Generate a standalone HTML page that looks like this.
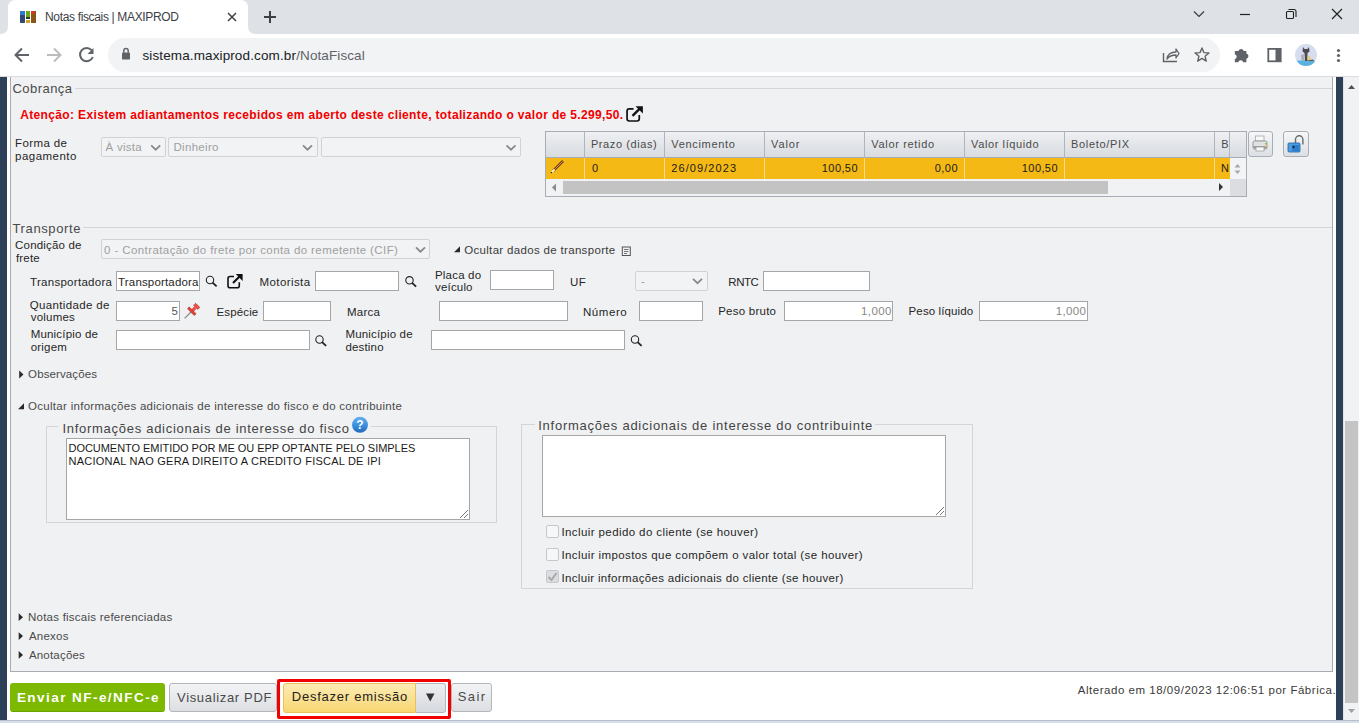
<!DOCTYPE html>
<html><head><meta charset="utf-8">
<style>
*{margin:0;padding:0;box-sizing:border-box;}
html,body{width:1359px;height:723px;overflow:hidden;background:#fff;font-family:"Liberation Sans",sans-serif;}
.b{position:absolute;}
svg{position:absolute;left:0;top:0;}
svg text{font-family:"Liberation Sans",sans-serif;}
</style></head><body>
<div class="b" style="left:0px;top:77px;width:1359px;height:646px;background:#fff"></div>
<div class="b" style="left:0px;top:77px;width:7px;height:643px;background:#2c4058"></div>
<div class="b" style="left:1336px;top:77px;width:7px;height:643px;background:#2c4058"></div>
<div class="b" style="left:1343px;top:77px;width:1px;height:643px;background:#e3e4e8"></div>
<div class="b" style="left:1344px;top:77px;width:15px;height:643px;background:#f1f2f4"></div>
<div class="b" style="left:1345px;top:421px;width:13px;height:282px;background:#c4c4c4"></div>
<div class="b" style="left:0px;top:720px;width:1359px;height:3px;background:#d6dfeb;border-top:1px solid #b9bdc5"></div>
<div class="b" style="left:7px;top:716px;width:4px;height:4px;background:#fff;border-radius:0 0 0 3px"></div>
<div class="b" style="left:10px;top:77px;width:1323px;height:595px;background:#f0f1f3;border:1px solid #a8abb4;border-top:none"></div>
<div class="b" style="left:75px;top:88px;width:1257px;height:1px;background:#d3d5d9"></div>
<div class="b" style="left:101px;top:137px;width:65px;height:20px;background:#f2f3f4;border:1px solid #d0d2d6;border-radius:2px"></div>
<div class="b" style="left:168px;top:137px;width:150px;height:20px;background:#f2f3f4;border:1px solid #d0d2d6;border-radius:2px"></div>
<div class="b" style="left:321px;top:137px;width:200px;height:20px;background:#f2f3f4;border:1px solid #d0d2d6;border-radius:2px"></div>
<div class="b" style="left:545px;top:131px;width:702px;height:66px;background:#f1f2f4;border:1px solid #a9acb4"></div>
<div class="b" style="left:546px;top:132px;width:700px;height:25px;background:linear-gradient(#eef0f2,#d8dbe0)"></div>
<div class="b" style="left:546px;top:157px;width:700px;height:1px;background:#a9acb4"></div>
<div class="b" style="left:546px;top:158px;width:684px;height:21px;background:#f5b916"></div>
<div class="b" style="left:584px;top:132px;width:1px;height:25px;background:#b0b4bc"></div>
<div class="b" style="left:584px;top:158px;width:1px;height:21px;background:#f9dc8c"></div>
<div class="b" style="left:664px;top:132px;width:1px;height:25px;background:#b0b4bc"></div>
<div class="b" style="left:664px;top:158px;width:1px;height:21px;background:#f9dc8c"></div>
<div class="b" style="left:764px;top:132px;width:1px;height:25px;background:#b0b4bc"></div>
<div class="b" style="left:764px;top:158px;width:1px;height:21px;background:#f9dc8c"></div>
<div class="b" style="left:864px;top:132px;width:1px;height:25px;background:#b0b4bc"></div>
<div class="b" style="left:864px;top:158px;width:1px;height:21px;background:#f9dc8c"></div>
<div class="b" style="left:964px;top:132px;width:1px;height:25px;background:#b0b4bc"></div>
<div class="b" style="left:964px;top:158px;width:1px;height:21px;background:#f9dc8c"></div>
<div class="b" style="left:1064px;top:132px;width:1px;height:25px;background:#b0b4bc"></div>
<div class="b" style="left:1064px;top:158px;width:1px;height:21px;background:#f9dc8c"></div>
<div class="b" style="left:1214px;top:132px;width:1px;height:25px;background:#b0b4bc"></div>
<div class="b" style="left:1214px;top:158px;width:1px;height:21px;background:#f9dc8c"></div>
<div class="b" style="left:1229px;top:132px;width:1px;height:25px;background:#b0b4bc"></div>
<div class="b" style="left:1230px;top:158px;width:16px;height:21px;background:#f3f4f6"></div>
<div class="b" style="left:1230px;top:179px;width:16px;height:17px;background:#dcdde0"></div>
<div class="b" style="left:563px;top:181px;width:545px;height:13px;background:#c3c3c3"></div>
<div class="b" style="left:1248px;top:131px;width:25px;height:26px;background:linear-gradient(#f6f7f8,#dcdfe3);border:1px solid #a9adb5;border-radius:3px"></div>
<div class="b" style="left:1283px;top:131px;width:26px;height:26px;background:linear-gradient(#f6f7f8,#dcdfe3);border:1px solid #a9adb5;border-radius:3px"></div>
<div class="b" style="left:83px;top:227px;width:1249px;height:1px;background:#d3d5d9"></div>
<div class="b" style="left:101px;top:239px;width:329px;height:20px;background:#f2f3f4;border:1px solid #d0d2d6;border-radius:2px"></div>
<div class="b" style="left:116px;top:271px;width:84px;height:20px;background:#fff;border:1px solid #a6a6a6"></div>
<div class="b" style="left:315px;top:271px;width:84px;height:20px;background:#fff;border:1px solid #a6a6a6"></div>
<div class="b" style="left:490px;top:270px;width:64px;height:20px;background:#fff;border:1px solid #a6a6a6"></div>
<div class="b" style="left:635px;top:271px;width:73px;height:20px;background:#f2f3f4;border:1px solid #d0d2d6;border-radius:2px"></div>
<div class="b" style="left:763px;top:271px;width:107px;height:20px;background:#fff;border:1px solid #a6a6a6"></div>
<div class="b" style="left:116px;top:301px;width:64px;height:20px;background:#fff;border:1px solid #a6a6a6"></div>
<div class="b" style="left:263px;top:301px;width:68px;height:20px;background:#fff;border:1px solid #a6a6a6"></div>
<div class="b" style="left:439px;top:301px;width:129px;height:20px;background:#fff;border:1px solid #a6a6a6"></div>
<div class="b" style="left:639px;top:301px;width:64px;height:20px;background:#fff;border:1px solid #a6a6a6"></div>
<div class="b" style="left:784px;top:301px;width:109px;height:20px;background:#fff;border:1px solid #a6a6a6"></div>
<div class="b" style="left:979px;top:301px;width:109px;height:20px;background:#fff;border:1px solid #a6a6a6"></div>
<div class="b" style="left:116px;top:330px;width:194px;height:20px;background:#fff;border:1px solid #a6a6a6"></div>
<div class="b" style="left:431px;top:330px;width:194px;height:20px;background:#fff;border:1px solid #a6a6a6"></div>
<div class="b" style="left:46px;top:426px;width:451px;height:97px;border:1px solid #d3d5d9"></div>
<div class="b" style="left:58px;top:420px;width:313px;height:10px;background:#f0f1f3"></div>
<div class="b" style="left:66px;top:438px;width:404px;height:82px;background:#fff;border:1px solid #a6a6a6"></div>
<div class="b" style="left:521px;top:424px;width:452px;height:165px;border:1px solid #d3d5d9"></div>
<div class="b" style="left:535px;top:418px;width:340px;height:10px;background:#f0f1f3"></div>
<div class="b" style="left:542px;top:435px;width:404px;height:82px;background:#fff;border:1px solid #a6a6a6"></div>
<div class="b" style="left:546px;top:525px;width:13px;height:13px;background:#f6f7f8;border:1px solid #c6c8cc;border-radius:2px"></div>
<div class="b" style="left:546px;top:547.5px;width:13px;height:13px;background:#f6f7f8;border:1px solid #c6c8cc;border-radius:2px"></div>
<div class="b" style="left:546px;top:570px;width:13px;height:13px;background:#dcdde0;border:1px solid #c6c8cc;border-radius:2px"></div>
<div class="b" style="left:10px;top:683px;width:155px;height:29px;background:#7cb900;border-bottom:1px solid #6aa400;border-radius:3px"></div>
<div class="b" style="left:169px;top:683px;width:108px;height:29px;background:linear-gradient(#f3f4f6,#dcdee2);border:1px solid #b3b6bd;border-radius:3px"></div>
<div class="b" style="left:277px;top:679px;width:174px;height:40px;border:3px solid #f00000;border-radius:2px"></div>
<div class="b" style="left:283px;top:683px;width:133px;height:30px;background:linear-gradient(#fcecb4,#f8d672);border:1px solid #e8c15a;border-radius:3px 0 0 3px"></div>
<div class="b" style="left:416px;top:683px;width:30px;height:30px;background:linear-gradient(#eceef1,#d6d9de);border:1px solid #b3b6bd;border-left:none;border-radius:0 3px 3px 0"></div>
<div class="b" style="left:451px;top:683px;width:41px;height:29px;background:linear-gradient(#f3f4f6,#dcdee2);border:1px solid #b3b6bd;border-radius:3px"></div>
<svg width="1359" height="723" viewBox="0 0 1359 723">
<text x="12.46" y="92.8" font-size="13" fill="#4a4a4a" textLength="59.58" lengthAdjust="spacing">Cobrança</text>
<text x="20.24" y="119" font-size="12" font-weight="700" fill="#f00000" textLength="602.92" lengthAdjust="spacing">Atenção: Existem adiantamentos recebidos em aberto deste cliente, totalizando o valor de 5.299,50.</text>
<text x="15.08" y="146.9" font-size="11.5" fill="#262626" textLength="51.84" lengthAdjust="spacing">Forma de</text>
<text x="15.08" y="159.7" font-size="11.5" fill="#262626" textLength="61.34" lengthAdjust="spacing">pagamento</text>
<text x="105.50" y="151" font-size="11.5" fill="#a0a0a0" textLength="36.24" lengthAdjust="spacing">À vista</text>
<text x="173.50" y="151" font-size="11.5" fill="#a0a0a0" textLength="44.97" lengthAdjust="spacing">Dinheiro</text>
<text x="590.92" y="147.8" font-size="11" fill="#4a4a4a" textLength="65.76" lengthAdjust="spacing">Prazo (dias)</text>
<text x="671.32" y="147.8" font-size="11" fill="#4a4a4a" textLength="63.56" lengthAdjust="spacing">Vencimento</text>
<text x="771.12" y="147.8" font-size="11" fill="#4a4a4a" textLength="28.26" lengthAdjust="spacing">Valor</text>
<text x="871.32" y="147.8" font-size="11" fill="#4a4a4a" textLength="62.76" lengthAdjust="spacing">Valor retido</text>
<text x="971.12" y="147.8" font-size="11" fill="#4a4a4a" textLength="67.46" lengthAdjust="spacing">Valor líquido</text>
<text x="1070.92" y="147.8" font-size="11" fill="#4a4a4a" textLength="58.26" lengthAdjust="spacing">Boleto/PIX</text>
<text x="1221.30" y="147.8" font-size="11" fill="#4a4a4a">B</text>
<text x="592.00" y="171.8" font-size="11" fill="#1a1a1a">0</text>
<text x="671.32" y="171.8" font-size="11" fill="#1a1a1a" textLength="64.76" lengthAdjust="spacing">26/09/2023</text>
<text x="857.50" y="171.8" font-size="11" fill="#1a1a1a" textLength="35.66" lengthAdjust="spacing" text-anchor="end">100,50</text>
<text x="957.50" y="171.8" font-size="11" fill="#1a1a1a" textLength="22.69" lengthAdjust="spacing" text-anchor="end">0,00</text>
<text x="1057.50" y="171.8" font-size="11" fill="#1a1a1a" textLength="35.66" lengthAdjust="spacing" text-anchor="end">100,50</text>
<text x="1221.00" y="171.8" font-size="11" fill="#1a1a1a">N</text>
<text x="12.46" y="232.7" font-size="13" fill="#4a4a4a" textLength="68.08" lengthAdjust="spacing">Transporte</text>
<text x="15.08" y="248.8" font-size="11.5" fill="#262626" textLength="66.34" lengthAdjust="spacing">Condição de</text>
<text x="16.00" y="261.5" font-size="11.5" fill="#262626" textLength="23.70" lengthAdjust="spacing">frete</text>
<text x="104.08" y="254" font-size="11.5" fill="#a0a0a0" textLength="293.84" lengthAdjust="spacing">0 - Contratação do frete por conta do remetente (CIF)</text>
<text x="464.18" y="253.9" font-size="11.5" fill="#3a3a3a" textLength="151.04" lengthAdjust="spacing">Ocultar dados de transporte</text>
<text x="30.08" y="285.6" font-size="11.5" fill="#262626" textLength="81.84" lengthAdjust="spacing">Transportadora</text>
<text x="118.08" y="285.6" font-size="11.5" fill="#262626" textLength="80.34" lengthAdjust="spacing">Transportadora</text>
<text x="259.58" y="286.3" font-size="11.5" fill="#262626" textLength="50.54" lengthAdjust="spacing">Motorista</text>
<text x="435.00" y="279" font-size="11.5" fill="#262626" textLength="46.10" lengthAdjust="spacing">Placa do</text>
<text x="435.00" y="291.3" font-size="11.5" fill="#262626" textLength="37.53" lengthAdjust="spacing">veículo</text>
<text x="570.00" y="286.3" font-size="11.5" fill="#262626" textLength="15.79" lengthAdjust="spacing">UF</text>
<text x="641.00" y="284.5" font-size="11.5" fill="#a0a0a0">-</text>
<text x="728.28" y="286.1" font-size="11.5" fill="#262626" textLength="30.64" lengthAdjust="spacing">RNTC</text>
<text x="29.78" y="308.8" font-size="11.5" fill="#262626" textLength="79.54" lengthAdjust="spacing">Quantidade de</text>
<text x="30.70" y="321.1" font-size="11.5" fill="#262626" textLength="44.11" lengthAdjust="spacing">volumes</text>
<text x="178.00" y="315" font-size="11.5" fill="#555" text-anchor="end">5</text>
<text x="216.58" y="316.3" font-size="11.5" fill="#262626" textLength="41.64" lengthAdjust="spacing">Espécie</text>
<text x="347.00" y="316.3" font-size="11.5" fill="#262626" textLength="32.91" lengthAdjust="spacing">Marca</text>
<text x="582.88" y="315.8" font-size="11.5" fill="#262626" textLength="43.84" lengthAdjust="spacing">Número</text>
<text x="718.18" y="315" font-size="11.5" fill="#262626" textLength="57.84" lengthAdjust="spacing">Peso bruto</text>
<text x="891.30" y="315" font-size="11.5" fill="#888" textLength="30.22" lengthAdjust="spacing" text-anchor="end">1,000</text>
<text x="908.58" y="315" font-size="11.5" fill="#262626" textLength="64.64" lengthAdjust="spacing">Peso líquido</text>
<text x="1086.00" y="315" font-size="11.5" fill="#888" textLength="30.22" lengthAdjust="spacing" text-anchor="end">1,000</text>
<text x="30.70" y="338.3" font-size="11.5" fill="#262626" textLength="67.16" lengthAdjust="spacing">Município de</text>
<text x="30.70" y="351.2" font-size="11.5" fill="#262626" textLength="36.21" lengthAdjust="spacing">origem</text>
<text x="345.40" y="338.3" font-size="11.5" fill="#262626" textLength="67.16" lengthAdjust="spacing">Município de</text>
<text x="345.40" y="351.2" font-size="11.5" fill="#262626" textLength="38.20" lengthAdjust="spacing">destino</text>
<text x="28.08" y="378" font-size="11.5" fill="#4a4a4a" textLength="68.84" lengthAdjust="spacing">Observações</text>
<text x="28.08" y="409.5" font-size="11.5" fill="#4a4a4a" textLength="373.84" lengthAdjust="spacing">Ocultar informações adicionais de interesse do fisco e do contribuinte</text>
<text x="62.46" y="432.5" font-size="13" fill="#444" textLength="286.58" lengthAdjust="spacing">Informações adicionais de interesse do fisco</text>
<text x="68.52" y="451.5" font-size="11" fill="#1a1a1a" textLength="346.76" lengthAdjust="spacing">DOCUMENTO EMITIDO POR ME OU EPP OPTANTE PELO SIMPLES</text>
<text x="68.52" y="464.7" font-size="11" fill="#1a1a1a" textLength="312.36" lengthAdjust="spacing">NACIONAL NAO GERA DIREITO A CREDITO FISCAL DE IPI</text>
<text x="538.16" y="430" font-size="13" fill="#444" textLength="334.08" lengthAdjust="spacing">Informações adicionais de interesse do contribuinte</text>
<text x="561.48" y="535.6" font-size="11.5" fill="#262626" textLength="196.64" lengthAdjust="spacing">Incluir pedido do cliente (se houver)</text>
<text x="561.48" y="558.8" font-size="11.5" fill="#262626" textLength="301.04" lengthAdjust="spacing">Incluir impostos que compõem o valor total (se houver)</text>
<text x="561.48" y="582" font-size="11.5" fill="#262626" textLength="281.74" lengthAdjust="spacing">Incluir informações adicionais do cliente (se houver)</text>
<text x="27.98" y="621" font-size="11.5" fill="#4a4a4a" textLength="144.24" lengthAdjust="spacing">Notas fiscais referenciadas</text>
<text x="28.90" y="639.9" font-size="11.5" fill="#4a4a4a" textLength="39.51" lengthAdjust="spacing">Anexos</text>
<text x="28.90" y="658.7" font-size="11.5" fill="#4a4a4a" textLength="55.97" lengthAdjust="spacing">Anotações</text>
<text x="16.92" y="702" font-size="13.5" font-weight="700" fill="#fff" textLength="141.66" lengthAdjust="spacing">Enviar NF-e/NFC-e</text>
<text x="177.06" y="702" font-size="13" fill="#4a4a4a" textLength="94.38" lengthAdjust="spacing">Visualizar PDF</text>
<text x="291.76" y="701.4" font-size="13" fill="#222" textLength="115.48" lengthAdjust="spacing">Desfazer emissão</text>
<text x="457.66" y="701.4" font-size="13" fill="#4a4a4a" textLength="27.38" lengthAdjust="spacing">Sair</text>
<text x="1077.78" y="693.9" font-size="11.5" fill="#3a3a3a" textLength="257.84" lengthAdjust="spacing">Alterado em 18/09/2023 12:06:51 por Fábrica.</text>
<path d="M1348 89 L1351.5 85 L1355 89 Z" fill="#505050"/>
<path d="M1348 709 L1351.5 713 L1355 709 Z" fill="#a0a0a0"/>
<g transform="translate(626,107.5) scale(1.08)"><path d="M7 1.2 H3 Q1 1.2 1 3.2 V10.5 Q1 12.5 3 12.5 H10.3 Q12.3 12.5 12.3 10.5 V7" fill="none" stroke="#111" stroke-width="1.6"/><path d="M6 7.8 L13 0.8" stroke="#111" stroke-width="2.1"/><path d="M8.8 -1.2 H15.6 V5.6 Z" fill="#111"/></g>
<path d="M151.2 145.3 L155.7 149.7 L160.2 145.3" fill="none" stroke="#8a8a8a" stroke-width="1.8"/>
<path d="M303.0 145.3 L307.5 149.7 L312.0 145.3" fill="none" stroke="#8a8a8a" stroke-width="1.8"/>
<path d="M506.5 145.3 L511 149.7 L515.5 145.3" fill="none" stroke="#8a8a8a" stroke-width="1.8"/>
<path d="M556 183.5 L552 187.5 L556 191.5 Z" fill="#8a8a8a"/>
<path d="M1219 183 L1223 187 L1219 191 Z" fill="#333"/>
<path d="M1234.5 167.5 L1237.5 164 L1240.5 167.5 Z" fill="#a8a8a8"/><path d="M1234.5 170.5 L1237.5 174 L1240.5 170.5 Z" fill="#a8a8a8"/>
<path d="M553 171 L563 161" stroke="#6b4a10" stroke-width="2.6" stroke-linecap="butt"/><path d="M553.5 170.5 L562.5 161.5" stroke="#ff7070" stroke-width="1"/><path d="M551.5 172.5 L554.5 169.5" stroke="#fff4c0" stroke-width="2"/><circle cx="551.5" cy="172.5" r="0.8" fill="#222"/>
<rect x="1255.5" y="136" width="8.5" height="5" fill="#f8f8f8" stroke="#a8a8a8" stroke-width="0.8"/><rect x="1253" y="141" width="14" height="8" rx="1.5" fill="#e0e1e3" stroke="#8e9094" stroke-width="0.9"/><rect x="1253.4" y="146" width="13.2" height="2.6" fill="#9a9ca0"/><rect x="1256" y="147" width="8" height="4" fill="#f8f8f8" stroke="#a0a0a0" stroke-width="0.8"/><rect x="1265" y="143" width="1.4" height="1.4" fill="#6c3"/><rect x="1265" y="145.5" width="1.4" height="1.4" fill="#fb3"/>
<path d="M1295.5 144 V139.5 A3.7 3.7 0 0 1 1302.9 139.5 V144.5" fill="none" stroke="#6a6a6a" stroke-width="1.4"/><rect x="1288" y="143" width="12" height="9" rx="1" fill="#4a9ee0" stroke="#1f5fa8" stroke-width="0.8"/><rect x="1292" y="145" width="7" height="6" fill="#2f7cc8"/><circle cx="1293.5" cy="147" r="1" fill="#111"/>
<path d="M416.0 247.3 L420.5 251.7 L425.0 247.3" fill="none" stroke="#8a8a8a" stroke-width="1.8"/>
<path d="M454 252.3 L460 246.3 L460 252.3 Z" fill="#2a2a2a"/>
<rect x="622.3" y="247" width="8" height="8.5" fill="none" stroke="#555" stroke-width="1"/><path d="M624 249.5 H628.5 M624 251.5 H628.5 M624 253.5 H627" stroke="#555" stroke-width="0.8"/>
<circle cx="210" cy="280" r="3.7" fill="none" stroke="#222" stroke-width="1.1"/><path d="M212.6 282.6 L216.6 286.4" stroke="#222" stroke-width="1.8"/>
<g transform="translate(227,275.3) scale(1.0)"><path d="M7 1.2 H3 Q1 1.2 1 3.2 V10.5 Q1 12.5 3 12.5 H10.3 Q12.3 12.5 12.3 10.5 V7" fill="none" stroke="#111" stroke-width="1.6"/><path d="M6 7.8 L13 0.8" stroke="#111" stroke-width="2.1"/><path d="M8.8 -1.2 H15.6 V5.6 Z" fill="#111"/></g>
<circle cx="409.5" cy="280.3" r="3.7" fill="none" stroke="#222" stroke-width="1.1"/><path d="M412.1 282.90000000000003 L416.1 286.7" stroke="#222" stroke-width="1.8"/>
<path d="M693.0 278.8 L697.5 283.2 L702.0 278.8" fill="none" stroke="#8a8a8a" stroke-width="1.8"/>
<g transform="rotate(45 191 312)"><path d="M191 312 V321" stroke="#8a8a8a" stroke-width="1.2"/><rect x="188" y="302.5" width="6" height="3" rx="0.8" fill="#f25050" stroke="#7a3010" stroke-width="0.5"/><rect x="189.3" y="305.5" width="3.4" height="4.5" fill="#f25050"/><rect x="186" y="309.6" width="10" height="2.6" rx="1" fill="#f03a3a" stroke="#7a3010" stroke-width="0.5"/></g>
<circle cx="319.5" cy="339.5" r="3.7" fill="none" stroke="#222" stroke-width="1.1"/><path d="M322.1 342.1 L326.1 345.9" stroke="#222" stroke-width="1.8"/>
<circle cx="635" cy="339.5" r="3.7" fill="none" stroke="#222" stroke-width="1.1"/><path d="M637.6 342.1 L641.6 345.9" stroke="#222" stroke-width="1.8"/>
<path d="M19.2 370.6 L23.5 374.5 L19.2 378.40000000000003 Z" fill="#2a2a2a"/>
<path d="M18 409.2 L24 403.2 L24 409.2 Z" fill="#2a2a2a"/>
<defs><linearGradient id="hg" x1="0" y1="0" x2="0" y2="1"><stop offset="0" stop-color="#62b0ea"/><stop offset="0.55" stop-color="#3b8ee0"/><stop offset="1" stop-color="#2466b8"/></linearGradient></defs>
<circle cx="360" cy="424.8" r="8" fill="url(#hg)"/><text x="360" y="429.3" font-size="12" font-weight="700" fill="#fff" text-anchor="middle">?</text>
<path d="M460 518 L468 510 M464 518 L468 514" stroke="#777" stroke-width="1"/>
<path d="M936 515 L944 507 M940 515 L944 511" stroke="#777" stroke-width="1"/>
<path d="M548.5 577 L551.5 580 L556.5 573" fill="none" stroke="#a8a8a8" stroke-width="2"/>
<path d="M18.7 613.3 L23.0 617.1999999999999 L18.7 621.0999999999999 Z" fill="#2a2a2a"/>
<path d="M18.7 632.2 L23.0 636.1 L18.7 640.0 Z" fill="#2a2a2a"/>
<path d="M18.7 651 L23.0 654.9 L18.7 658.8 Z" fill="#2a2a2a"/>
<path d="M426 693.5 L434.5 693.5 L430.25 701.5 Z" fill="#333"/>
</svg>
<div class="b" style="left:0;top:0;width:1359px;height:34px;background:#dee1e6"></div>
<div class="b" style="left:0;top:34px;width:1359px;height:42px;background:#fff"></div>
<div class="b" style="left:0;top:76px;width:1359px;height:1px;background:#dadce0"></div>
<svg width="1359" height="77" viewBox="0 0 1359 77">
<path d="M0 34 Q8 34 8 26 L8 8 Q8 0 16 0 L240 0 Q248 0 248 8 L248 26 Q248 34 256 34 Z" fill="#fff"/>
<rect x="20" y="11" width="5" height="12" rx="0.8" fill="#2c4a72"/><rect x="20" y="11" width="5" height="4" fill="#2f7ad0"/>
<rect x="26" y="11" width="4" height="6" fill="#6aaa1a"/><rect x="26" y="17" width="4" height="2" fill="#333"/><rect x="26" y="20" width="4" height="3" fill="#d4a020"/>
<rect x="31" y="11" width="5" height="12" fill="#8a5518"/><rect x="31" y="11" width="3" height="3" fill="#e43030"/>
<path d="M228 13 L236 21 M236 13 L228 21" stroke="#3c4043" stroke-width="1.5"/>
<path d="M264 17 H276 M270 11 V23" stroke="#3c4043" stroke-width="2"/>
<path d="M1194 11.5 L1199 16.5 L1204 11.5" fill="none" stroke="#3c3c3c" stroke-width="1.2"/>
<path d="M1240 14.5 H1250" stroke="#202020" stroke-width="1.2"/>
<rect x="1286.5" y="11.5" width="7" height="7" rx="1" fill="none" stroke="#202020" stroke-width="1.1"/><path d="M1288.5 9.5 H1294 Q1296 9.5 1296 11.5 V17" fill="none" stroke="#202020" stroke-width="1.1"/>
<path d="M1332 9 L1342 19 M1342 9 L1332 19" stroke="#202020" stroke-width="1.2"/>
<rect x="108" y="38" width="1112" height="34" rx="17" fill="#f1f3f4"/>
<path d="M29 55 H16 M22 48.5 L15.5 55 L22 61.5" fill="none" stroke="#5f6368" stroke-width="2"/>
<path d="M47 55 H60 M54 48.5 L60.5 55 L54 61.5" fill="none" stroke="#babcbe" stroke-width="2"/>
<path d="M91.6 50.2 A6.6 6.6 0 1 0 92.8 57" fill="none" stroke="#5f6368" stroke-width="2"/><path d="M93.5 48 V54 H87.5 Z" fill="#5f6368"/>
<rect x="122" y="52.5" width="8" height="7" rx="0.8" fill="#5f6368"/><path d="M123.8 52.8 V50.8 A2.2 2.2 0 0 1 128.2 50.8 V52.8" fill="none" stroke="#5f6368" stroke-width="1.5"/>
<path d="M1163.5 53 V61.5 H1177" fill="none" stroke="#5f6368" stroke-width="1.4"/><path d="M1167 59 Q1168 52 1176 52 V49 L1179 53.5 L1176 58 V55 Q1170 55 1167 59 Z" fill="none" stroke="#5f6368" stroke-width="1.3" stroke-linejoin="round"/>
<polygon points="1202.00,47.90 1203.88,52.61 1208.94,52.94 1205.04,56.19 1206.29,61.11 1202.00,58.40 1197.71,61.11 1198.96,56.19 1195.06,52.94 1200.12,52.61" fill="none" stroke="#5f6368" stroke-width="1.4" stroke-linejoin="round"/>
<path d="M1234.8 51 H1238.4 A2.8 2.8 0 0 1 1243.8 51 H1246.4 V53.4 A2.8 2.8 0 0 1 1246.4 58.8 V62.2 H1243.2 A2.6 2.6 0 0 0 1238.2 62.2 H1234.8 V59.2 A2.6 2.6 0 0 0 1234.8 54.2 Z" fill="#5f6368"/>
<rect x="1268.3" y="48.9" width="12.4" height="12.4" fill="none" stroke="#5f6368" stroke-width="1.8"/><rect x="1275.5" y="48.9" width="5.2" height="12.4" fill="#5f6368"/>
<defs><clipPath id="avc"><circle cx="1306" cy="55" r="11"/></clipPath></defs><g clip-path="url(#avc)"><rect x="1295" y="44" width="22" height="22" fill="#d5ddee"/><path d="M1294 60.8 Q1306 59.5 1318 61 V67 H1294 Z" fill="#5ab0de"/><path d="M1303 47 L1304.5 49 H1307.5 L1309 47 L1309.5 51.5 L1307.5 53 L1307.5 61 L1305 61 L1304.5 53 L1302.5 51.5 Z" fill="#4a4a50"/><path d="M1307.5 55.5 Q1311 55.5 1311.5 61 H1307.5 Z" fill="#e3cd85"/><path d="M1301 55 L1303.5 54 L1304.5 60 L1301.5 60 Z" fill="#a9acb4"/><path d="M1305 61 H1314 L1313 59.5 Z" fill="#555"/></g>
<circle cx="1338.5" cy="50.5" r="1.6" fill="#5f6368"/><circle cx="1338.5" cy="55.5" r="1.6" fill="#5f6368"/><circle cx="1338.5" cy="60.5" r="1.6" fill="#5f6368"/>
<text x="45.00" y="21" font-size="12" fill="#3c4043" textLength="134.00" lengthAdjust="spacing">Notas fiscais | MAXIPROD</text>
<text x="142.40" y="60.2" font-size="13.5" fill="#202124" textLength="153.50" lengthAdjust="spacing">sistema.maxiprod.com.br</text>
<text x="296.20" y="60.2" font-size="13.5" fill="#5f6368" textLength="68.50" lengthAdjust="spacing">/NotaFiscal</text>
</svg>
</body></html>
